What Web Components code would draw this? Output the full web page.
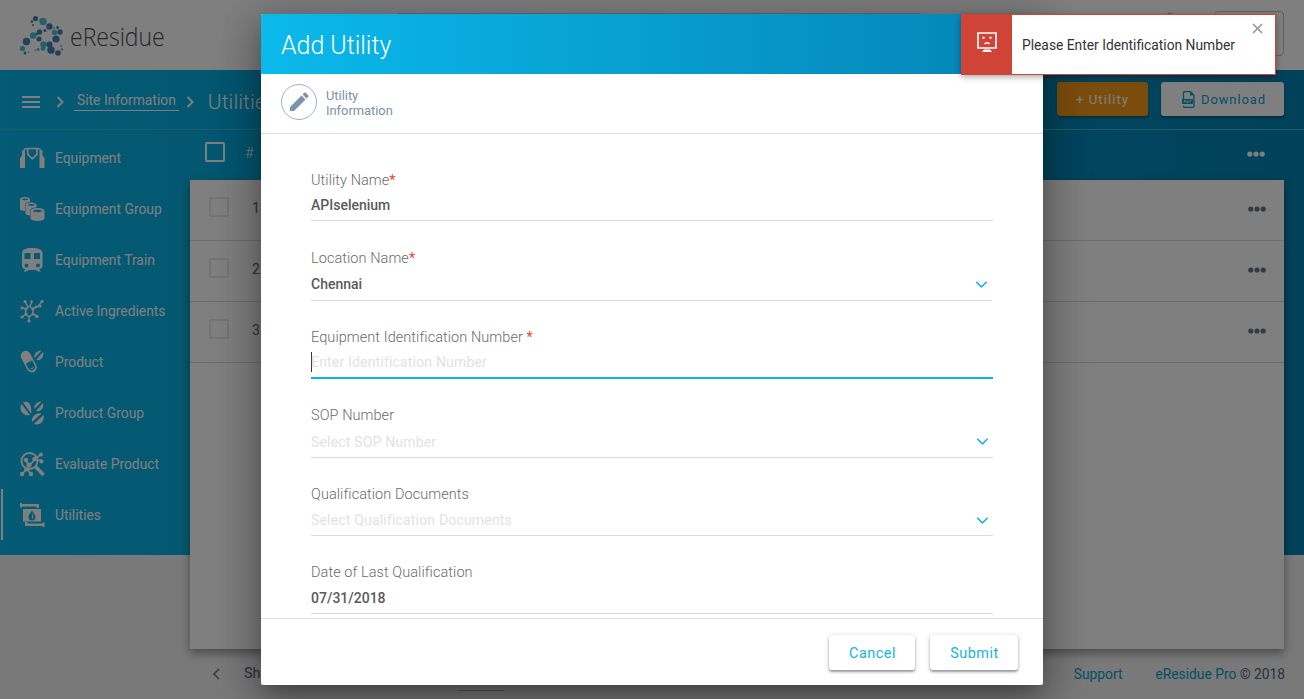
<!DOCTYPE html>
<html lang="en">
<head>
<meta charset="utf-8">
<title>eResidue - Utilities</title>
<style>
html,body{margin:0;height:100%;overflow:hidden}
body{font-family:Roboto,"Liberation Sans",sans-serif;font-size:14px;color:#54667a}
</style>
</head>
<body>
<eres-app></eres-app>
<script>
const define = (name, html) => customElements.define(name, class extends HTMLElement {
  constructor() {
    super();
    const t = document.createElement('template');
    t.innerHTML = html;
    this.attachShadow({mode: 'open'}).append(t.content.cloneNode(true));
  }
});

const ICONS = {
  equipment: '<path d="M0 22V11.500h1V10h1V4.500h3V22zM24.500 22V11.500h-1V10h-1V4.500h-3V22z"/><path d="M3.500 4.800C4 3.500 5 2.600 7 2.500M21 4.800c-.5-1.300-1.500-2.200-3.500-2.300" fill="none" stroke="currentColor" stroke-width="1.500"/><path d="M7.700 2.500h9.200v5.800L12.300 12.800 7.700 8.300z" fill="none" stroke="currentColor" stroke-width="1.700"/>',
  group: '<path d="M0 2.500C0 1 2 0 5 0s5 1 5 2.500V5C7 5 5 6 5 8v6c-3 0-5-1-5-2zM2 2.500C3 3.500 7 3.500 8.500 2.500 7 1.300 3 1.300 2 2.500z" fill-rule="evenodd"/><path d="M5.500 8c0-1.500 2-2.500 5.500-2.500S16 6.500 16.500 8v2.500C12 10.500 10 12 10 14v4.500c-2.500 0-4.500-.8-4.500-2zM7.500 8c1.500 1 6 1 7.500 0-1.500-1.200-6-1.200-7.500 0z" fill-rule="evenodd"/><path d="M10.500 14c0-1.800 3-3 7-3s7 1.200 7 3v7c0 1.800-3 3-7 3s-7-1.200-7-3zM12.500 14c2 1.500 8 1.500 10 0-2-1.600-8-1.600-10 0z" fill-rule="evenodd"/>',
  train: '<path d="M2 5c0-3 3-5 10-5s10.500 2 10.500 5v13c0 2-1.500 3-3.500 3l2 2.500h-3L16 22H8.500L6.500 23.500h-3l2-2.500C3.500 21 2 20 2 18zM4.500 5v6h6V5zm9.500 0v6h6V5zM6.500 15.500a2 2 0 100 4 2 2 0 000-4zm11.500 0a2 2 0 100 4 2 2 0 000-4z" fill-rule="evenodd"/>',
  molecule: '<path d="M6 9.500l3-2h.500l3.500 2.500v5l-4 3-3.500-3zM8 8L5 2.500M9.500 8L12 3M13 9.500l5-2 4-5M6 10L2 8.500M6 15L2 18M9 17.500V22M13 15l4 2" fill="none" stroke="currentColor" stroke-width="1.400"/><circle cx="5" cy="2.500" r="1.600"/><circle cx="11.500" cy="2.500" r="1.300"/><circle cx="2" cy="9" r="1.500"/><circle cx="2" cy="18" r="1.600"/><circle cx="9" cy="22" r="1.600"/><circle cx="17" cy="17.500" r="1.700"/><circle cx="6" cy="10" r="1.600"/><circle cx="13" cy="10" r="1.600"/><circle cx="6" cy="15" r="1.500"/><circle cx="13" cy="15" r="1.500"/><circle cx="16" cy="8" r="1.400"/><circle cx="20" cy="7" r="1.600"/><circle cx="22" cy="2.500" r="1.600"/>',
  product: '<g transform="rotate(-28 9 12)"><rect x="4" y="0" width="10" height="23" rx="5"/><path d="M5.500 12h7v5.500a3.500 3.500 0 01-7 0z" fill="var(--hole)"/><path d="M7.500 18.500q1.500 1.500 3 0" fill="none" stroke="currentColor"/></g><path d="M14.500 8c-1-4 3-8 7-7.500zM16 10L23 2c1.500 4-2 9.500-7 8z"/>',
  pgroup: '<path d="M3 1.500c4-2 7.500 1 8 5 .3 2.500.3 4 .3 6.500zM1.500 3C-1.500 9 3 15.500 10 14zM14.500 8c-1-4 3-8 7-7.500zM16 10L23 2c1.500 4-2 9.500-7 8zM12 21c-1-5 4-10 9.500-8.500zM13.800 23L23.500 14c1.500 6-3.500 11-9.700 9z"/>',
  evaluate: '<circle cx="9.500" cy="9" r="8" fill="none" stroke="currentColor" stroke-width="1.900"/><path d="M15 14l8.500 9" stroke="currentColor" stroke-width="3.600"/><path d="M2 22l5-5 4 5M5 7l4 7 6-7 5-4M15 8h7M9 14l-3 3" fill="none" stroke="currentColor" stroke-width="1.700"/><circle cx="2" cy="22" r="2.200"/><circle cx="11" cy="22" r="2.200"/><circle cx="6" cy="17.500" r="2"/><circle cx="6" cy="8" r="2.200"/><circle cx="9" cy="13" r="2.500"/><circle cx="14.500" cy="7" r="2.200"/><circle cx="21" cy="2.500" r="2"/><circle cx="21.500" cy="9.500" r="2"/>',
  utilities: '<path d="M0 0h2v1h17v4h-2.500V3.500H2V4.500H0zM24.500 24h-2v-1H5v-4h2.500v1.500h15v-1h2zM3 6h18v12.500H3zM12 7.500c-2 3-3.500 4.500-3.500 6.500a3.500 3.500 0 007 0c0-2-1.500-3.500-3.500-6.500zM12.500 10c1 2 1.500 4.500-.5 6z" fill-rule="evenodd"/>',
};

customElements.define('eres-icon', class extends HTMLElement {
  constructor() { super(); this.attachShadow({mode: 'open'}); }
  connectedCallback() {
    this.shadowRoot.innerHTML = `<style>:host{display:block;width:26px;height:25px;--hole:#07b3e3}svg{display:block;overflow:visible}</style><svg width="26" height="25" viewBox="0 0 26 25" fill="currentColor">${ICONS[this.getAttribute('name')]}</svg>`;
  }
});

define('eres-logo', `<style>:host{display:flex;align-items:center;height:70px;padding-left:20px;box-sizing:border-box}
span{font:300 25px/40px "Open Sans";color:#4c4c50;margin-left:6px;padding-top:1px;letter-spacing:0;white-space:nowrap;display:inline-block;transform-origin:0 50%;transform:scaleX(.92)}svg{display:block;margin-top:1px}</style>
<svg width="44" height="42" viewBox="20 14 44 42"><g fill="#4a7fb5"><circle cx="35.500" cy="17.500" r="2.600"/><circle cx="49.500" cy="25.500" r="3.200"/><circle cx="60" cy="31" r="2.700"/><circle cx="56" cy="38" r="3.600"/><circle cx="26.500" cy="40.500" r="3.700"/><circle cx="39.500" cy="31" r="2.700"/><circle cx="39" cy="38" r="2.500"/><circle cx="51" cy="49" r="3.800"/><circle cx="49.500" cy="43.500" r="3"/><circle cx="58" cy="52" r="2.800"/><circle cx="57.500" cy="26.500" r="1.500"/><circle cx="32" cy="20.500" r="1.300"/><circle cx="33" cy="24" r="1"/><circle cx="45" cy="29.500" r="1.500"/><circle cx="25" cy="52" r="1.500"/><circle cx="36.500" cy="33" r="1.500"/></g><g fill="#4ac0d0"><circle cx="43" cy="20.500" r="3.700"/><circle cx="33" cy="34.500" r="3.200"/><circle cx="54.500" cy="31.500" r="2.700"/><circle cx="22.500" cy="47.500" r="2.600"/><circle cx="43.500" cy="43.500" r="3.200"/><circle cx="43" cy="47.500" r="2.300"/><circle cx="38" cy="48.500" r="1.500"/><circle cx="62" cy="48.500" r="1.300"/><circle cx="61" cy="45" r=".9"/><circle cx="54" cy="27" r=".9"/><circle cx="28.500" cy="51" r=".8"/><circle cx="35" cy="49.500" r=".8"/></g></svg><span>eResidue</span>`);

define('eres-header', `<style>:host{display:grid;grid-template-columns:396px 526px 1fr;height:70px;background:#fff}
.q{height:43px;margin-top:13px;border:1px solid #cdd3dd;border-radius:3px;box-sizing:border-box}
.r{display:flex;justify-content:flex-end;gap:38px;padding:11px 20px 0 0}.b{box-sizing:border-box;width:70px;height:45px;border:1px solid #b9c0c9;border-radius:4px}
.n{width:12px;height:12px;margin-top:2px;border-radius:50%;background:#f09b1a}</style>
<eres-logo></eres-logo><div class="q"></div><div class="r"><div class="n"></div><div class="b"></div></div>`);

define('eres-crumbs', `<style>:host{display:flex;align-items:center;height:60px;box-sizing:border-box;border-bottom:1px solid #3fb6d8;padding:0 20px 0 22px;color:#fff}
svg{display:block;flex:none}.s{margin-left:16px}.m{margin-top:4px}.l{font-size:13.850px;line-height:17px;border-bottom:1px solid #fff;padding:0 3px 1px;margin:4px 0 0 9px;white-space:nowrap}
.u{font-weight:300;font-size:21px;line-height:24px;margin:5px 0 0 13px;letter-spacing:.1px}.g{flex:1}
.b{display:flex;align-items:center;justify-content:center;height:34px;border-radius:3px;box-shadow:0 2px 3px rgba(0,0,0,.3);font-weight:400;font-size:13px;letter-spacing:1px;box-sizing:border-box;margin-bottom:1px}
.a{width:91px;background:#f79b1a;font-size:13.300px}.d{width:123px;background:#fff;color:#06a0cd;margin-left:13px;gap:6px;padding-left:3px;letter-spacing:.9px}</style>
<svg class="m" width="18" height="12"><path d="M0 1h18M0 6h18M0 11h18" stroke="#fff" stroke-width="2"/></svg>
<svg class="s m" width="9" height="12"><path d="M1.500 1l5 5-5 5" fill="none" stroke="#fff" stroke-width="1.900"/></svg>
<span class="l">Site Information</span>
<svg class="m" style="margin-left:7px" width="9" height="12"><path d="M1.500 1l5 5-5 5" fill="none" stroke="#fff" stroke-width="1.900"/></svg>
<span class="u">Utilities</span><div class="g"></div>
<div class="b a">+ Utility</div><div class="b d"><svg width="13" height="17"><path d="M1.500 8V2q0-1.300 1.300-1.300h5.700l3.500 3.500V15q0 1.300-1.300 1.300H2.800Q1.500 16.300 1.500 15" fill="none" stroke="#06a0cd" stroke-width="1.300"/><path d="M8 .5v4h4zM0 8h11v5H0z" fill="#06a0cd"/><path d="M2 9.500h1.500v1H2v1M5 9.500v2h1v-2M8 11.500v-2h1.500" fill="none" stroke="#fff" stroke-width=".7"/></svg>Download</div>`);

define('eres-nav-item', `<style>:host{display:flex;align-items:center;height:51px;box-sizing:border-box;padding:2px 0 0 18px;border-left:2px solid transparent;color:#fff;font-size:13.850px;white-space:nowrap}
:host([active]){border-left:2px solid #fff;margin-left:1px;padding-left:17px}slot[name=icon]{display:block}.t{margin:-2px 0 0 9px}</style><slot name="icon"></slot><span class="t"><slot></slot></span>`);

define('eres-sidebar', `<style>:host{display:block;width:190px;padding-top:2px}</style>` + [
  ['equipment','Equipment'],['group','Equipment Group'],['train','Equipment Train'],['molecule','Active Ingredients'],['product','Product'],['pgroup','Product Group'],['evaluate','Evaluate Product'],['utilities','Utilities']
].map(([i,t]) => `<eres-nav-item${t==='Utilities'?' active':''}><eres-icon slot="icon" name="${i}"></eres-icon>${t}</eres-nav-item>`).join(''));

const dots = '<svg class="dots" width="18" height="6"><circle cx="2.800" cy="3" r="2.600"/><circle cx="9" cy="3" r="2.600"/><circle cx="15.200" cy="3" r="2.600"/></svg>';
define('eres-row', `<style>:host{display:flex;align-items:center;height:61px;box-sizing:border-box;border-bottom:1px solid #dadada;padding:0 18px 0 19px;color:#54667a;font-size:14px}
i{box-sizing:border-box;width:20px;height:20px;border:2px solid #e9e9e9;border-radius:2px;margin-bottom:6px}b{font-weight:400;margin:-4px 0 0 23px;flex:1}.dots{fill:#6a7384;display:block;margin-top:-3px}</style><i></i><b><slot></slot></b>${dots}`);

define('eres-table', `<style>:host{display:block;width:1094px}
.h{display:flex;align-items:center;height:50px;padding:0 19px 0 15px;color:#fff;font-size:14.400px}.h i{box-sizing:border-box;width:20px;height:20px;border:2px solid #fff;border-radius:2px;margin-bottom:6px}.h span{font-weight:300;margin:-4px 0 0 20px;flex:1}.dots{fill:#fff;display:block;margin-top:-3px}
.c{height:469px;background:#fff;box-shadow:0 4px 9px rgba(0,0,0,.4)}
.f{display:flex;align-items:center;height:50px;font-size:13.800px;white-space:nowrap}.p{margin-left:22px}.s{margin:-2px 0 0 24px;font-size:14.400px}.n{width:45px;height:33px;border-bottom:1px solid #b5b5b5;margin-left:179px}.g{flex:1}a{color:#06a0cd}.e{margin-left:33px;margin-right:-1px}</style>
<div class="h"><i></i><span>#</span>${dots}</div>
<div class="c"><eres-row>1</eres-row><eres-row>2</eres-row><eres-row>3</eres-row></div>
<div class="f"><svg class="p" width="8" height="12"><path d="M7 1L2 6l5 5" fill="none" stroke="#777" stroke-width="1.600"/></svg><span class="s">Show</span><div class="n"></div><div class="g"></div><a>Support</a><span class="e"><a>eResidue Pro</a> © 2018</span></div>`);

define('eres-field', `<style>:host{display:block;height:var(--h,78px);margin-right:var(--mr,0)}
.l{font-weight:300;font-size:14.500px;line-height:18px;color:#6b6b6b;display:block;letter-spacing:.07px}
.l ::slotted(em){font-style:normal;font-weight:400;color:#f44336}
.v{display:flex;align-items:center;justify-content:space-between;box-sizing:border-box;height:var(--vh,31px);border-bottom:1px solid #d9d9de;color:#5a5a5c;font-weight:500;font-size:14px;letter-spacing:0}
:host([select]) .v{height:var(--vh,33px);padding-right:5px}
:host([empty]) .v{color:#e2e2e5;font-weight:400;letter-spacing:.18px}
:host([focused]) .v{border-bottom:2px solid #0cb5e8;height:32px}
:host([select][empty]) .t{padding-top:1px}
svg{display:none}:host([select]) svg{display:block;margin-top:1px}.c{display:none}
:host([focused]) .c{display:block;width:1px;height:20px;background:#333;margin-right:-1px}.t{flex:1}</style>
<span class="l"><slot name="label"></slot></span><div class="v"><span class="c"></span><span class="t"><slot></slot></span><svg width="12" height="7"><path d="M1.300.800l5.200 5 5.200-5" fill="none" stroke="#1fb0e6" stroke-width="1.600"/></svg></div>`);

define('eres-button', `<style>:host{display:flex;align-items:center;justify-content:center;height:35px;padding:1px 0 0 1px;box-sizing:border-box;background:#fff;border-radius:3px;color:#14b2e6;font-weight:400;font-size:14.400px;letter-spacing:.5px;box-shadow:0 2px 2px rgba(0,0,0,.3),0 1px 5px rgba(0,0,0,.2)}</style><slot></slot>`);

define('eres-dialog', `<style>:host{display:grid;grid-template-rows:60px 60px 1fr 67px;width:782px;height:671px;background:#fff;border-radius:2px;overflow:hidden;box-shadow:0 11px 15px -7px rgba(0,0,0,.2),0 14px 38px 3px rgba(0,0,0,.24),0 9px 46px 8px rgba(0,0,0,.16)}
.h{background:linear-gradient(90deg,#0bb9eb,#0482b4);color:#fff;font-weight:300;font-size:24.900px;line-height:60px;padding:2px 0 0 20px;box-sizing:border-box}
.w{display:flex;align-items:center;border-bottom:1px solid #dedee0;box-sizing:border-box;padding:0 20px 4px;font-size:12.850px;line-height:15px;color:#7b8fa8}.w>span+span{padding-top:2px}
.o{display:flex;align-items:center;justify-content:center;box-sizing:border-box;width:36px;height:36px;border:1px solid #9bb3c8;border-radius:50%;margin-right:9px}
.f{padding:38px 50px 0;overflow:hidden}.b{border-top:1px solid #dedee0;display:flex;justify-content:flex-end;gap:15px;padding:16px 25px 0 0}</style>
<div class="h">Add Utility</div>
<div class="w"><span class="o"><svg width="20" height="20" viewBox="0 0 20 20" fill="#7b93ad"><path d="M1 15L12.500 3.500l4 4L5 19H1zM13.600 2.400L15.200.800q.8-.8 1.600 0l2.400 2.400q.8.800 0 1.600l-1.600 1.600z"/></svg></span><span>Utility<br>Information</span></div>
<div class="f">
<eres-field><span slot="label">Utility Name</span><em slot="label">*</em>APIselenium</eres-field>
<eres-field select style="--mr:1px;--h:79px"><span slot="label">Location Name</span><em slot="label">*</em>Chennai</eres-field>
<eres-field empty focused><span slot="label">Equipment Identification Number </span><em slot="label">*</em>Enter Identification Number</eres-field>
<eres-field select empty style="--h:79px"><span slot="label">SOP Number</span>Select SOP Number</eres-field>
<eres-field select empty style="--vh:32px"><span slot="label">Qualification Documents</span>Select Qualification Documents</eres-field>
<eres-field style="--vh:32px"><span slot="label">Date of Last Qualification</span>07/31/2018</eres-field>
</div>
<div class="b"><eres-button style="width:86px">Cancel</eres-button><eres-button style="width:88px">Submit</eres-button></div>`);

define('eres-toast', `<style>:host{display:flex;box-sizing:border-box;width:315px;height:61px;border:1px solid #d04437;background:#fff;box-shadow:0 2px 6px rgba(0,0,0,.35);color:#333}
.i{width:50px;background:#d04437;display:flex;align-items:center;justify-content:center}.m{flex:1;padding:0 0 0 10px;line-height:61px;font-size:13.800px;white-space:nowrap}.x{margin:8px 12px 0 0}svg{display:block}</style>
<div class="i"><svg width="20" height="20" style="margin-top:-5px"><path d="M1 1h18v15H1z" fill="none" stroke="#fff" stroke-width="1.600"/><path d="M5.500 4.800h2v2h-2zM12.500 4.800h2v2h-2zM7 17.500h6l2 2.500H5z" fill="#fff"/><path d="M7.500 12q2.500-2.500 5 0" fill="none" stroke="#fff" stroke-width="1.300"/></svg></div>
<div class="m"><slot></slot></div><svg class="x" width="11" height="11"><path d="M1 1l9 9M10 1l-9 9" stroke="#999" stroke-width="1.700"/></svg>`);

define('eres-app', `<style>:host{display:block;position:relative;height:699px;overflow:hidden}
.page{height:699px;background:#f2f2f2 linear-gradient(90deg,#08b6ea,#0482b4) 0 70px/100% 485px no-repeat}
.body{display:flex}
.scrim,.over{position:absolute;inset:0}.scrim{background:rgba(0,0,0,.5)}
.over{display:flex;justify-content:center;padding-top:14px}
eres-toast{position:absolute;top:14px;left:961px}</style>
<div class="page"><eres-header></eres-header><eres-crumbs></eres-crumbs><div class="body"><eres-sidebar></eres-sidebar><eres-table></eres-table></div></div>
<div class="scrim"></div><div class="over"><eres-dialog></eres-dialog></div><eres-toast>Please Enter Identification Number</eres-toast>`);
</script>
</body>
</html>
